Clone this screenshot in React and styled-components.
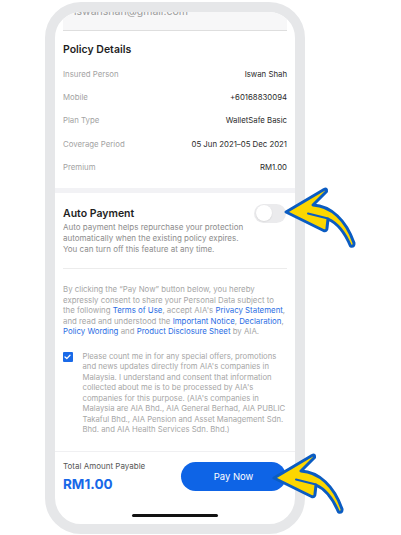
import React from "react";
import styled, { createGlobalStyle } from "styled-components";

const GlobalStyle = createGlobalStyle`
  body {
    margin: 0;
    background: #ffffff;
    font-family: "Inter", "Liberation Sans", sans-serif;
    -webkit-font-smoothing: antialiased;
  }
`;

const Page = styled.div`
  position: relative;
  width: 401px;
  height: 535px;
  padding: 2px 0 0 45px;
  box-sizing: border-box;
  overflow: hidden;
`;

const Phone = styled.div`
  width: 260px;
  height: 532px;
  box-sizing: border-box;
  border: 10px solid #e6e7e9;
  border-radius: 36px;
  background: #ffffff;
  overflow: hidden;
  display: flex;
  flex-direction: column;

  & > * {
    flex-shrink: 0;
  }
`;

const EmailBar = styled.div`
  height: 18px;
  margin: 0 8px;
  padding-left: 11px;
  background: #f7f7f8;
  border-bottom: 1px solid #dedede;
  overflow: hidden;
`;

const Email = styled.div`
  margin-top: -6px;
  font-size: 10.5px;
  line-height: 12px;
  color: #9b9b9b;
`;

const Section = styled.div`
  padding: ${(p) => p.$pad || "11px 8px 9.5px"};
`;

const Title = styled.div`
  font-size: 10.5px;
  line-height: 16px;
  font-weight: 600;
  color: #1f1f1f;
  margin-bottom: ${(p) => p.$gap || "0"};
`;

const Row = styled.div`
  display: flex;
  justify-content: space-between;
  align-items: center;
  height: 23.3px;
  font-size: 7.8px;
`;

const Label = styled.span`
  color: #a3a3a3;
`;

const Value = styled.span`
  color: #2b2b2b;
`;

const Band = styled.div`
  height: 5px;
  background: #f2f2f5;
`;

const AutoRow = styled.div`
  display: flex;
  justify-content: space-between;
  align-items: flex-start;
`;

const AutoText = styled.div`
  width: 184px;
  padding-top: 2px;
`;

const Desc = styled.div`
  font-size: 8px;
  line-height: 11px;
  color: #8c8c8c;
`;

const Toggle = styled.div`
  width: 32px;
  height: 19px;
  border-radius: 10px;
  background: #ebebed;
  padding: 1.5px;
  box-sizing: border-box;
  margin-right: 1px;
`;

const Knob = styled.div`
  width: 16px;
  height: 16px;
  border-radius: 50%;
  background: #ffffff;
  box-shadow: 0 0.5px 1.5px rgba(0, 0, 0, 0.12);
`;

const Rule = styled.div`
  height: 1px;
  margin: 13px 8px 0;
  background: #ececec;
`;

const Legal = styled.div`
  font-size: ${(p) => p.$size || "7.85px"};
  line-height: 10.5px;
  color: #a6a6a6;
  white-space: nowrap;
`;

const Link = styled.span`
  color: #2a6de4;
`;

const CheckRow = styled.div`
  display: flex;
  gap: 10px;
  margin-top: 15px;
`;

const CheckBox = styled.div`
  flex: none;
  width: 9.5px;
  height: 9.5px;
  margin-top: 0.5px;
  border-radius: 1px;
  background: #1a6ae8;
  display: flex;
  align-items: center;
  justify-content: center;
`;

const Spacer = styled.div`
  flex: 1 1 auto !important;
`;

const Footer = styled.div`
  border-top: 1px solid #f0f0f2;
  padding: 8px 8px 7px;
  display: flex;
  flex-direction: column;
`;

const FooterRow = styled.div`
  display: flex;
  justify-content: space-between;
  align-items: center;
`;

const TotalLabel = styled.div`
  font-size: 8px;
  line-height: 12px;
  color: #565656;
`;

const Amount = styled.div`
  margin-top: 3px;
  font-size: 13.5px;
  line-height: 18px;
  font-weight: 700;
  color: #1768e8;
`;

const PayButton = styled.button`
  width: 105px;
  height: 29px;
  margin-right: 1px;
  border: none;
  border-radius: 15px;
  background: #0e64e6;
  color: #ffffff;
  font-family: inherit;
  font-size: 9.5px;
`;

const HomeBar = styled.div`
  align-self: center;
  width: 86px;
  height: 3.5px;
  margin-top: 20.5px;
  border-radius: 2px;
  background: #121212;
`;

const ArrowSvg = styled.svg`
  position: absolute;
  overflow: visible;
`;

const Arrow = ({ x, y }) => (
  <ArrowSvg
    width="80"
    height="66"
    viewBox="-4 -28 80 66"
    style={{ left: x - 4, top: y - 28 }}
  >
    <path
      d="M1 0 L39 -22.5 Q42 -24 41.5 -20.5 L28 -7 C46 -6 61 8 69 31 Q69.5 35 65.5 34 C60 21 52 11 43 7 L42 16 Q42 19.5 38.5 18.5 Z"
      fill="#fcd600"
      stroke="#0b5cc2"
      strokeWidth="3"
      strokeLinejoin="round"
    />
    <path d="M23 1.5 L43 6.5" stroke="#0b5cc2" strokeWidth="2" strokeLinecap="round" fill="none" />
  </ArrowSvg>
);

export default function App() {
  return (
    <Page>
      <GlobalStyle />
      <Phone>
        <EmailBar>
          <Email>iswanshah@gmail.com</Email>
        </EmailBar>

        <Section>
          <Title $gap="4px">Policy Details</Title>
          <Row><Label>Insured Person</Label><Value>Iswan Shah</Value></Row>
          <Row><Label>Mobile</Label><Value>+60168830094</Value></Row>
          <Row><Label>Plan Type</Label><Value>WalletSafe Basic</Value></Row>
          <Row><Label>Coverage Period</Label><Value>05 Jun 2021–05 Dec 2021</Value></Row>
          <Row><Label>Premium</Label><Value>RM1.00</Value></Row>
        </Section>

        <Band />

        <Section $pad="11px 8px 0">
          <AutoRow>
            <AutoText>
              <Title>Auto Payment</Title>
              <Desc>
                Auto payment helps repurchase your protection automatically when the
                existing policy expires. You can turn off this feature at any time.
              </Desc>
            </AutoText>
            <Toggle><Knob /></Toggle>
          </AutoRow>
        </Section>

        <Rule />

        <Section $pad="15.5px 8px 0">
          <Legal>
            By clicking the “Pay Now” button below, you hereby<br />
            expressly consent to share your Personal Data subject to<br />
            the following <Link>Terms of Use</Link>, accept AIA's <Link>Privacy Statement</Link>,<br />
            and read and understood the <Link>Important Notice</Link>, <Link>Declaration</Link>,<br />
            <Link>Policy Wording</Link> and <Link>Product Disclosure Sheet</Link> by AIA.
          </Legal>
          <CheckRow>
            <CheckBox>
              <svg width="7" height="6" viewBox="0 0 7 6">
                <path d="M1 3 L2.8 4.6 L6 1.2" stroke="#fff" strokeWidth="1.3" fill="none" strokeLinecap="round" strokeLinejoin="round" />
              </svg>
            </CheckBox>
            <Legal $size="7.72px">
              Please count me in for any special offers, promotions<br />
              and news updates directly from AIA's companies in<br />
              Malaysia. I understand and consent that information<br />
              collected about me is to be processed by AIA's<br />
              companies for this purpose. (AIA's companies in<br />
              Malaysia are AIA Bhd., AIA General Berhad, AIA PUBLIC<br />
              Takaful Bhd., AIA Pension and Asset Management Sdn.<br />
              Bhd. and AIA Health Services Sdn. Bhd.)
            </Legal>
          </CheckRow>
        </Section>

        <Spacer />

        <Footer>
          <FooterRow>
            <div>
              <TotalLabel>Total Amount Payable</TotalLabel>
              <Amount>RM1.00</Amount>
            </div>
            <PayButton>Pay Now</PayButton>
          </FooterRow>
          <HomeBar />
        </Footer>
      </Phone>

      <Arrow x={284.5} y={211.7} />
      <Arrow x={273.3} y={478.3} />
    </Page>
  );
}
